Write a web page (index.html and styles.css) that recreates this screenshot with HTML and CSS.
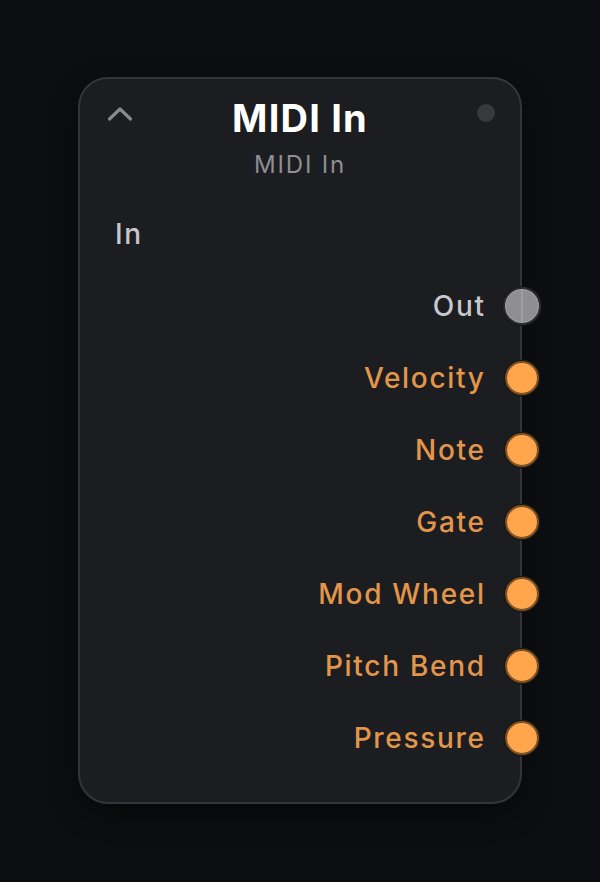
FILE: index.html
```html
<!DOCTYPE html>
<html lang="en">

<head>
    <meta charset="UTF-8">
    <meta name="viewport" content="width=device-width, initial-scale=1.0">
    <title>MIDI In</title>
    <link rel="stylesheet" href="styles.css">
</head>

<body>
    <div class="node">
        <div class="node-header">
            <button class="collapse" aria-label="Collapse">
                <svg width="26" height="16" viewBox="0 0 26 16">
                    <path d="M2.5 13 L13 3 L23.5 13" fill="none" stroke="#8a8a8e" stroke-width="3.2" stroke-linecap="round" stroke-linejoin="round"/>
                </svg>
            </button>
            <h1 class="title">MIDI In</h1>
            <span class="status-dot"></span>
        </div>
        <div class="subtitle">MIDI In</div>

        <div class="ports">
            <div class="port-row input">
                <span class="label">In</span>
            </div>
            <div class="port-row output">
                <span class="label">Out</span>
                <span class="socket midi"></span>
            </div>
            <div class="port-row output cv">
                <span class="label">Velocity</span>
                <span class="socket"></span>
            </div>
            <div class="port-row output cv">
                <span class="label">Note</span>
                <span class="socket"></span>
            </div>
            <div class="port-row output cv">
                <span class="label">Gate</span>
                <span class="socket"></span>
            </div>
            <div class="port-row output cv">
                <span class="label">Mod Wheel</span>
                <span class="socket"></span>
            </div>
            <div class="port-row output cv">
                <span class="label">Pitch Bend</span>
                <span class="socket"></span>
            </div>
            <div class="port-row output cv">
                <span class="label">Pressure</span>
                <span class="socket"></span>
            </div>
        </div>
    </div>
</body>

</html>
```

FILE: styles.css
```css
body {
    font-family: 'Inter', 'Noto Sans', sans-serif;
    background: #0d0e11;
    margin: 0;
    padding: 77px 0 0 78px;
    height: 882px;
    box-sizing: border-box;
}

.node {
    position: relative;
    width: 444px;
    box-sizing: border-box;
    background: #1c1d21;
    border: 2px solid #353539;
    border-radius: 30px;
    padding: 15px 0 28px;
    box-shadow: 0 10px 30px rgba(0, 0, 0, 0.45);
}

.node-header {
    position: relative;
    height: 48px;
    display: flex;
    justify-content: center;
    align-items: center;
}

.title {
    margin: 0;
    font-size: 38px;
    font-weight: 700;
    color: #ffffff;
    line-height: 48px;
    letter-spacing: 1.2px;
}

.collapse {
    position: absolute;
    left: 27px;
    top: 12px;
    padding: 0;
    border: none;
    background: none;
    display: block;
}

.collapse svg {
    display: block;
}

.status-dot {
    position: absolute;
    right: 25px;
    top: 10px;
    width: 18px;
    height: 18px;
    border-radius: 50%;
    background: #38393d;
}

.subtitle {
    margin-top: 7px;
    text-align: center;
    font-size: 24px;
    line-height: 32px;
    color: #8e8e93;
    letter-spacing: 1.8px;
}

.ports {
    margin-top: 17px;
}

.port-row {
    position: relative;
    height: 72px;
    display: flex;
    align-items: center;
    padding: 0 36px 0 35px;
}

.port-row .label {
    font-size: 28px;
    font-weight: 500;
    color: #c7c7cc;
    letter-spacing: 1.7px;
}

.port-row.output {
    justify-content: flex-end;
}

.port-row.output .label {
    margin-right: -1.7px;
}

.port-row.cv .label {
    color: #e3964a;
}

.socket {
    position: absolute;
    right: -19px;
    top: 19px;
    width: 34px;
    height: 34px;
    box-sizing: border-box;
    border-radius: 50%;
    background: #ffa64d;
    border: 2px solid #7a5024;
    box-shadow: 0 0 0 1.5px #1a1612;
}

.socket.midi {
    right: -21px;
    top: 17px;
    width: 38px;
    height: 38px;
    background: #8e8e93;
    border: 2px solid #2c2c2f;
    box-shadow: inset 0 0 0 1px #a3a3a8, 0 0 0 1px #161618;
}

.socket.midi::after {
    content: "";
    position: absolute;
    left: 16px;
    top: 1px;
    bottom: 1px;
    width: 2px;
    background: rgba(255, 255, 255, 0.14);
}
```
